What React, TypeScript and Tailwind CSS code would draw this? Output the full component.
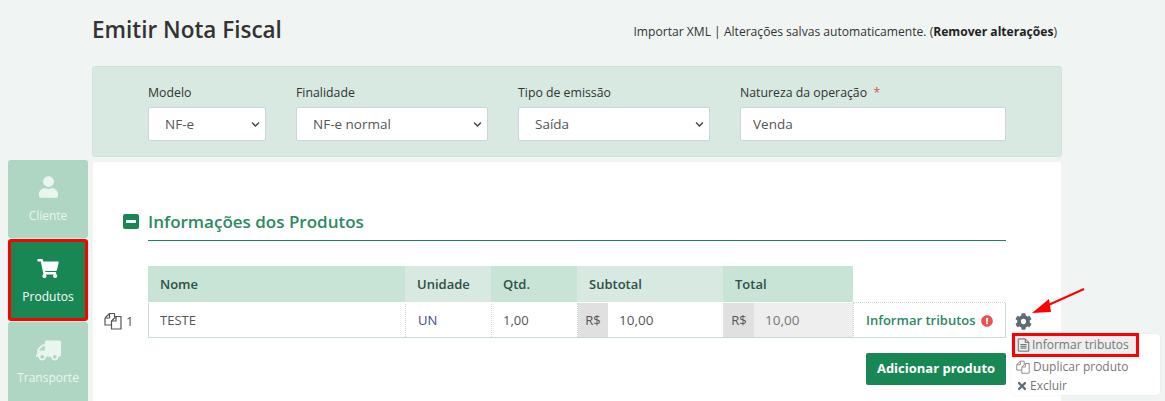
import React from "react";
import { FaUser, FaShoppingCart, FaTruck, FaCog, FaExclamationCircle, FaTimes, FaChevronDown } from "react-icons/fa";

const font = "font-['Open_Sans','Noto_Sans',sans-serif]";

function CopyIcon({ className }: { className?: string }) {
  return (
    <svg viewBox="0 0 18 18" className={className} fill="none" stroke="currentColor" strokeWidth="1.2" strokeLinejoin="round">
      <path d="M1 6 5.5 1.5H10.5V5" />
      <path d="M1 6V13H7.5" />
      <path d="M1 6H5.5V1.5" />
      <path d="M7.5 9 12 4.5H17V17H7.5Z" fill="#fff" />
      <path d="M7.5 9H12V4.5" />
    </svg>
  );
}

function FileIcon({ className }: { className?: string }) {
  return (
    <svg viewBox="0 0 14 16" className={className} fill="none" stroke="currentColor" strokeWidth="1.1">
      <path d="M1 1h8l4 4v10H1Z" />
      <path d="M9 1v4h4" />
      <path d="M3.5 7.5h7M3.5 9.5h7M3.5 11.5h7" />
    </svg>
  );
}

function Field({ label, value, width, select = true, required = false }: { label: string; value: string; width: string; select?: boolean; required?: boolean }) {
  return (
    <div className={`flex flex-col ${width}`}>
      <div className="h-[24px] pt-[1px] text-[12.3px] leading-[18px] text-[#333]">
        {label}
        {required && <span className="text-[#d9534f]"> &nbsp;*</span>}
      </div>
      <div className={`flex h-[34px] items-center justify-between rounded-[2px] border border-[#ccd6e0] bg-white pr-[3px] pt-[1px] text-[13.5px] text-[#555] ${select ? "pl-[16px]" : "pl-[12px]"}`}>
        <span>{value}</span>
        {select && <FaChevronDown className="mr-[1px] h-[9px] w-[11px] text-[#444]" />}
      </div>
    </div>
  );
}

function Tab({ icon, label, active = false, className = "" }: { icon: React.ReactNode; label: string; active?: boolean; className?: string }) {
  return (
    <div
      className={`flex w-[80px] shrink-0 flex-col items-center rounded-[3px] text-[12px] leading-[17px] ${
        active ? "border-[3px] border-[#ff0000] bg-[#198754] text-white" : "bg-[#afd5c3] text-[#eaf5ef]"
      } ${className}`}
    >
      {icon}
      <span>{label}</span>
    </div>
  );
}

function Head({ label, width, dark = false }: { label: string; width: string; dark?: boolean }) {
  return (
    <div className={`flex h-[36px] items-center pl-[12px] pt-[1px] text-[13px] font-semibold text-[#2f4f46] ${width} ${dark ? "bg-[#c8e4d6]" : "bg-[#d7e9e0]"}`}>
      {label}
    </div>
  );
}

export default function App() {
  return (
    <div className={`${font} relative flex h-[401px] w-[1165px] overflow-hidden bg-[#f0f5f3]`}>
      <div className="ml-[8px] flex w-[84px] flex-col gap-[1px] pt-[160px]">
        <Tab
          label="Cliente"
          className="h-[78px] pt-[16px]"
          icon={<FaUser className="mb-[9px] h-[22px] w-[19px]" />}
        />
        <Tab
          active
          label="Produtos"
          className="h-[82px] pt-[17px]"
          icon={<FaShoppingCart className="mb-[10px] h-[19px] w-[24px]" />}
        />
        <Tab
          label="Transporte"
          className="h-[90px] pt-[18px]"
          icon={<FaTruck className="mb-[8px] h-[21px] w-[25px] scale-x-[-1]" />}
        />
      </div>

      <div className="flex w-[970px] flex-col">
        <div className="flex h-[66px] shrink-0 items-start justify-between pr-[5px] pt-[14px]">
          <h1 className="text-[22.5px] font-semibold leading-[32px] text-[#333]">Emitir Nota Fiscal</h1>
          <div className="pt-[9px] text-[12.1px] leading-[18px] text-[#333]">
            Importar XML | Alterações salvas automaticamente. (<b className="font-bold text-[#222]">Remover alterações</b>)
          </div>
        </div>

        <div className="flex h-[91px] shrink-0 gap-[30px] rounded-[3px] border border-[#cfe2d8] bg-[#d7e9e0] pl-[55px] pt-[16px]">
          <Field label="Modelo" value="NF-e" width="w-[118px]" />
          <Field label="Finalidade" value="NF-e normal" width="w-[192px]" />
          <Field label="Tipo de emissão" value="Saída" width="w-[192px]" />
          <Field label="Natureza da operação" value="Venda" width="w-[266px]" select={false} required />
        </div>

        <div className="relative ml-[1px] mt-[5px] h-[239px] w-[968px] shrink-0 rounded-t-[3px] bg-white">
          <div className="ml-[30px] mt-[46px] flex h-[33px] w-[883px] items-start">
            <div className="mt-[6px] flex h-[15px] w-[16px] items-center justify-center rounded-[2px] bg-[#198754]">
              <div className="h-[3px] w-[10px] bg-white" />
            </div>
            <div className="ml-[9px] flex-1 border-b border-[#198754] pb-[6px] pt-[1px] text-[17px] font-semibold leading-[25px] text-[#2a8a62]">
              Informações dos Produtos
            </div>
          </div>

          <div className="ml-[55px] mt-[25px] flex w-[705px]">
            <Head label="Nome" width="w-[257px]" dark />
            <Head label="Unidade" width="w-[86px]" />
            <Head label="Qtd." width="w-[86px]" dark />
            <Head label="Subtotal" width="w-[146px]" />
            <Head label="Total" width="w-[130px]" dark />
          </div>

          <div className="mt-[1px] flex items-center">
            <div className="ml-[11px] flex w-[44px] items-center text-[#555]">
              <CopyIcon className="h-[18px] w-[18px]" />
              <span className="ml-[4px] mt-[2px] text-[13px]">1</span>
            </div>
            <div className="flex h-[35px] w-[858px] border-x border-b border-[#c9dbd4] pt-[1px] text-[13px] text-[#555]">
              <div className="flex w-[256px] items-center pl-[11px]">TESTE</div>
              <div className="flex w-[86px] items-center border-l border-dotted border-[#c9dbd4] pl-[12px] text-[#3d4a8a]">UN</div>
              <div className="flex w-[86px] items-center border-l border-dotted border-[#c9dbd4] pl-[11px]">1,00</div>
              <div className="-mt-[1px] flex w-[146px] items-center border-l border-dotted border-[#c9dbd4]">
                <span className="flex h-full w-[30px] items-center justify-center bg-[#e0e0e0] pt-[1px]">R$</span>
                <span className="ml-[11px] text-[13.5px]">10,00</span>
              </div>
              <div className="-mt-[1px] flex w-[130px] items-center border-l border-dotted border-[#c9dbd4] bg-[#eeeeee]">
                <span className="flex h-full w-[30px] items-center justify-center bg-[#e0e0e0] pt-[1px]">R$</span>
                <span className="ml-[11px] text-[13.5px] text-[#777]">10,00</span>
              </div>
              <div className="-mt-[2px] flex h-[36px] flex-1 items-center border-l border-t border-dotted border-[#c9dbd4] pl-[12px] font-semibold text-[#2a8a62]">
                Informar tributos
                <FaExclamationCircle className="ml-[5px] h-[12px] w-[12px] text-[#e8534f]" />
              </div>
            </div>
            <FaCog className="ml-[9px] mt-[1px] h-[17px] w-[17px] text-[#5f6b73]" />
          </div>

          <div className="ml-[773px] mt-[15px] flex h-[32px] w-[140px] items-center justify-center rounded-[2px] bg-[#198754] text-[13px] font-bold text-white">
            Adicionar produto
          </div>

          <svg viewBox="0 0 60 30" className="absolute left-[937px] top-[125px] h-[30px] w-[60px]">
            <path d="M54 2 14 20" stroke="#ff0000" strokeWidth="2" fill="none" />
            <path d="M2 26 19 12 21 25Z" fill="#ff0000" />
          </svg>
        </div>
      </div>

      <div className="absolute left-[1012px] top-[334px] flex h-[61px] w-[148px] flex-col rounded-[3px] bg-white text-[12px] text-[#777] shadow-[0_0_2px_rgba(0,0,0,0.08)]">
        <div className="-mt-[1px] flex h-[24px] w-[127px] items-center border-[3px] border-[#ff0000] bg-[#eeeeee] pl-[2px]">
          <FileIcon className="mr-[2px] h-[14px] w-[13px] text-[#666]" />
          Informar tributos
        </div>
        <div className="flex h-[19px] items-center pl-[4px]">
          <CopyIcon className="mr-[3px] h-[14px] w-[14px] text-[#888]" />
          Duplicar produto
        </div>
        <div className="flex h-[19px] items-center pl-[5px]">
          <FaTimes className="mr-[3px] h-[12px] w-[10px] text-[#5f6b73]" />
          Excluir
        </div>
      </div>
    </div>
  );
}
